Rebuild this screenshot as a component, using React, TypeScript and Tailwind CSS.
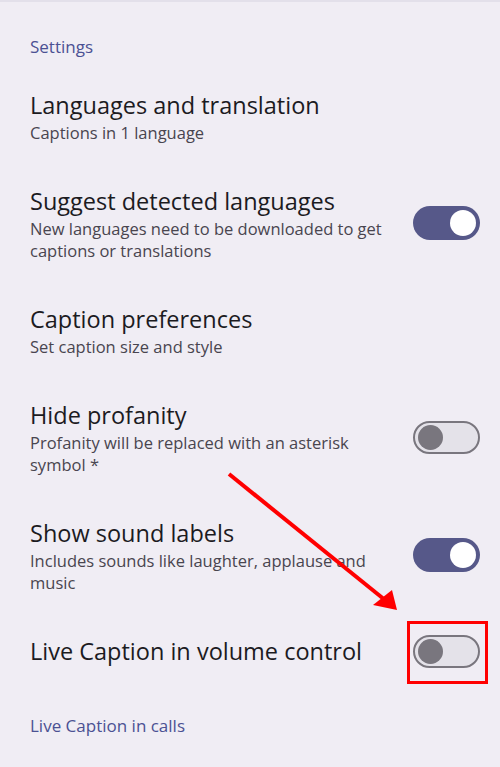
import React from "react";

interface Item {
  title: string;
  subtitle?: string;
  toggle?: "on" | "off";
  highlight?: boolean;
}

const items: Item[] = [
  { title: "Languages and translation", subtitle: "Captions in 1 language" },
  {
    title: "Suggest detected languages",
    subtitle: "New languages need to be downloaded to get captions or translations",
    toggle: "on",
  },
  { title: "Caption preferences", subtitle: "Set caption size and style" },
  {
    title: "Hide profanity",
    subtitle: "Profanity will be replaced with an asterisk symbol *",
    toggle: "off",
  },
  {
    title: "Show sound labels",
    subtitle: "Includes sounds like laughter, applause and music",
    toggle: "on",
  },
  { title: "Live Caption in volume control", toggle: "off", highlight: true },
];

function Toggle({ on }: { on: boolean }) {
  if (on) {
    return (
      <div className="w-[67px] h-[34px] rounded-full bg-[#565889] flex items-center justify-end pr-[4px]">
        <div className="w-[26px] h-[26px] rounded-full bg-white" />
      </div>
    );
  }
  return (
    <div className="w-[67px] h-[33px] rounded-full bg-[#e4e2e9] border-2 border-[#79767e] flex items-center pl-[3px]">
      <div className="w-[25px] h-[25px] rounded-full bg-[#79767e]" />
    </div>
  );
}

function Row({ item }: { item: Item }) {
  return (
    <div className="flex items-center gap-[20px] py-[20px] pl-[30px] pr-[20px]">
      <div className="flex-1 min-w-0">
        <div className="text-[23.5px] leading-[34px] text-[#1c1b1f]">{item.title}</div>
        {item.subtitle && (
          <div className="text-[16.5px] leading-[22px] text-[#49454f]">{item.subtitle}</div>
        )}
      </div>
      {item.toggle && (
        <div className="relative shrink-0">
          <Toggle on={item.toggle === "on"} />
          {item.highlight && (
            <span className="absolute -left-[6px] -right-[8px] -top-[14px] -bottom-[16px] border-[3px] border-[#ff0000]" />
          )}
        </div>
      )}
    </div>
  );
}

export default function App() {
  return (
    <div
      className="relative w-[500px] h-[767px] overflow-hidden bg-[#f0edf4] border-t-2 border-[#e3e0ea]"
      style={{ fontFamily: "'Open Sans', Roboto, sans-serif" }}
    >
      <div className="pt-[34px] pb-[10px] pl-[30px] text-[17px] leading-[22px] text-[#4b5193]">
        Settings
      </div>
      {items.map((item, i) => (
        <Row key={i} item={item} />
      ))}
      <div className="pt-[27px] pl-[30px] text-[17px] leading-[22px] text-[#4b5193]">
        Live Caption in calls
      </div>

      {/* annotation arrow */}
      <svg
        className="absolute inset-0 pointer-events-none"
        width="500"
        height="767"
        viewBox="0 0 500 767"
      >
        <line x1="229" y1="472" x2="385" y2="598" stroke="#ff0000" strokeWidth="4" />
        <polygon points="397,608 373,603 392,588" fill="#ff0000" />
      </svg>
    </div>
  );
}
